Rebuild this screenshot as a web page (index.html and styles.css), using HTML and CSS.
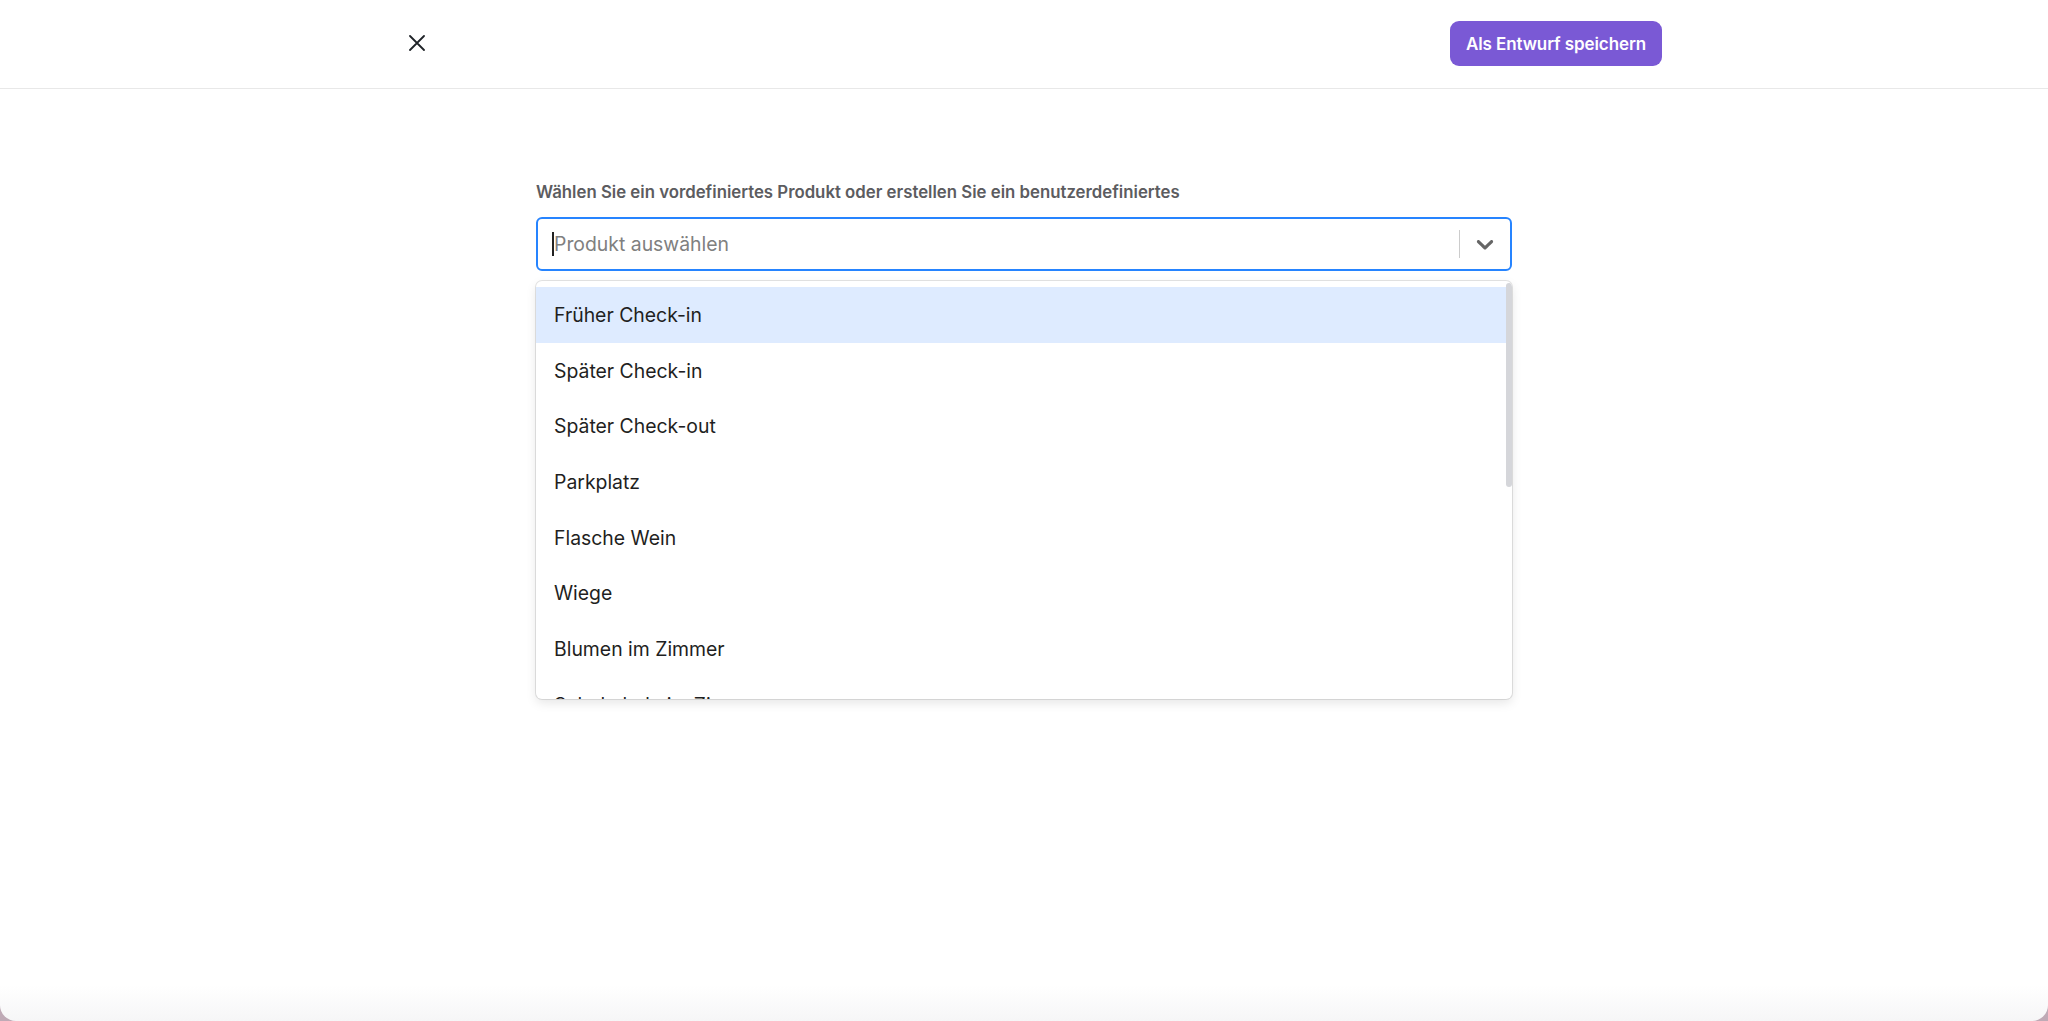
FILE: index.html
```html
<!DOCTYPE html>
<html lang="de">
<head>
<meta charset="utf-8">
<title>Produkt auswählen</title>
<link rel="stylesheet" href="styles.css">
</head>
<body>
<div class="sheet">
  <header class="topbar">
    <div class="topbar-inner">
      <button class="close-btn" aria-label="Schließen">
        <svg width="16" height="16" viewBox="0 0 16 16" fill="none" stroke="#1f2328" stroke-width="1.8" stroke-linecap="round"><path d="M1 1L15 15M15 1L1 15"/></svg>
      </button>
      <button class="draft-btn">Als Entwurf speichern</button>
    </div>
  </header>
  <main class="content">
    <div class="form">
      <label class="field-label">Wählen Sie ein vordefiniertes Produkt oder erstellen Sie ein benutzerdefiniertes</label>
      <div class="select">
        <div class="select-value"><span class="caret"></span><span class="placeholder">Produkt auswählen</span></div>
        <div class="indicators">
          <span class="sep"></span>
          <span class="chevron">
            <svg width="28" height="28" viewBox="0 0 20 20" fill="#666"><path d="M4.516 7.548c0.436-0.446 1.043-0.481 1.576 0l3.908 3.747 3.908-3.747c0.533-0.481 1.141-0.446 1.574 0 0.436 0.445 0.408 1.197 0 1.615-0.406 0.418-4.695 4.502-4.695 4.502-0.217 0.223-0.502 0.335-0.787 0.335s-0.57-0.112-0.789-0.335c0 0-4.287-4.084-4.695-4.502s-0.436-1.17 0-1.615z"/></svg>
          </span>
        </div>
      </div>
      <div class="menu">
        <ul class="menu-list">
          <li class="option focused">Früher Check-in</li>
          <li class="option">Später Check-in</li>
          <li class="option">Später Check-out</li>
          <li class="option">Parkplatz</li>
          <li class="option">Flasche Wein</li>
          <li class="option">Wiege</li>
          <li class="option">Blumen im Zimmer</li>
          <li class="option">Schokolade im Zimmer</li>
        </ul>
        <span class="scroll-thumb"></span>
      </div>
    </div>
  </main>
</div>
</body>
</html>
```

FILE: styles.css
```css
* { box-sizing: border-box; }
html, body {
  margin: 0;
  padding: 0;
  height: 100%;
  background: #bfaab6;
  font-family: Inter, "Noto Sans", "Liberation Sans", sans-serif;
}
.sheet {
  height: 1021px;
  background: linear-gradient(to bottom, #ffffff 0, #ffffff 985px, #f6f6f7 1021px);
  border-radius: 0 0 16px 16px;
  overflow: hidden;
}
.topbar {
  height: 89px;
  border-bottom: 1px solid #e8e8e8;
  background: #fff;
}
.topbar-inner {
  width: 1276px;
  margin: 0 auto;
  height: 88px;
  display: flex;
  align-items: center;
  justify-content: space-between;
  padding-bottom: 2px;
}
.close-btn {
  width: 46px;
  height: 46px;
  margin-left: 8px;
  border: none;
  background: transparent;
  display: flex;
  align-items: center;
  justify-content: center;
  padding: 0;
  cursor: pointer;
}
.draft-btn {
  height: 45px;
  width: 212px;
  border: none;
  border-radius: 9px;
  background: #7a59d5;
  color: #fff;
  font-family: Inter, "Noto Sans", sans-serif;
  font-size: 17px;
  font-weight: 600;
  letter-spacing: -0.1px;
  padding: 0;
  margin-top: 1px;
}
.content {
  display: flex;
  justify-content: center;
  padding-top: 93px;
}
.form {
  width: 976px;
}
.field-label {
  display: block;
  font-size: 16.8px;
  line-height: 20px;
  font-weight: 600;
  color: #5c5c60;
  margin-bottom: 15px;
}
.select {
  height: 54px;
  border: 2px solid #2684ff;
  border-radius: 6px;
  display: flex;
  align-items: center;
  background: #fff;
}
.select-value {
  flex: 1;
  display: flex;
  align-items: center;
  padding-left: 14px;
}
.caret {
  width: 1.5px;
  height: 24px;
  background: #222;
  margin-right: 0.5px;
}
.placeholder {
  font-size: 19.4px;
  color: #808080;
  line-height: 24px;
}
.indicators {
  display: flex;
  align-items: center;
  height: 100%;
}
.sep {
  width: 1px;
  height: 28px;
  background: #cccccc;
}
.chevron {
  width: 50px;
  display: flex;
  align-items: center;
  justify-content: center;
}
.chevron svg { display: block; }
.menu {
  position: relative;
  margin-top: 10px;
  height: 418px;
  border-radius: 6px;
  background: #fff;
  box-shadow: 0 0 0 1px rgba(0,0,0,0.1), 0 4px 11px rgba(0,0,0,0.1);
  overflow: hidden;
}
.menu-list {
  list-style: none;
  margin: 0;
  padding: 6px 6px 6px 0;
  height: 418px;
  overflow: hidden;
}
.scroll-thumb {
  position: absolute;
  top: 2px;
  right: 0;
  width: 6px;
  height: 204px;
  border-radius: 3px;
  background: #d5d6da;
}
.option {
  height: 55.7px;
  display: flex;
  align-items: center;
  padding: 0 18px;
  font-size: 19.4px;
  color: #1f1f22;
}
.option.focused {
  background: #deebff;
}
```
